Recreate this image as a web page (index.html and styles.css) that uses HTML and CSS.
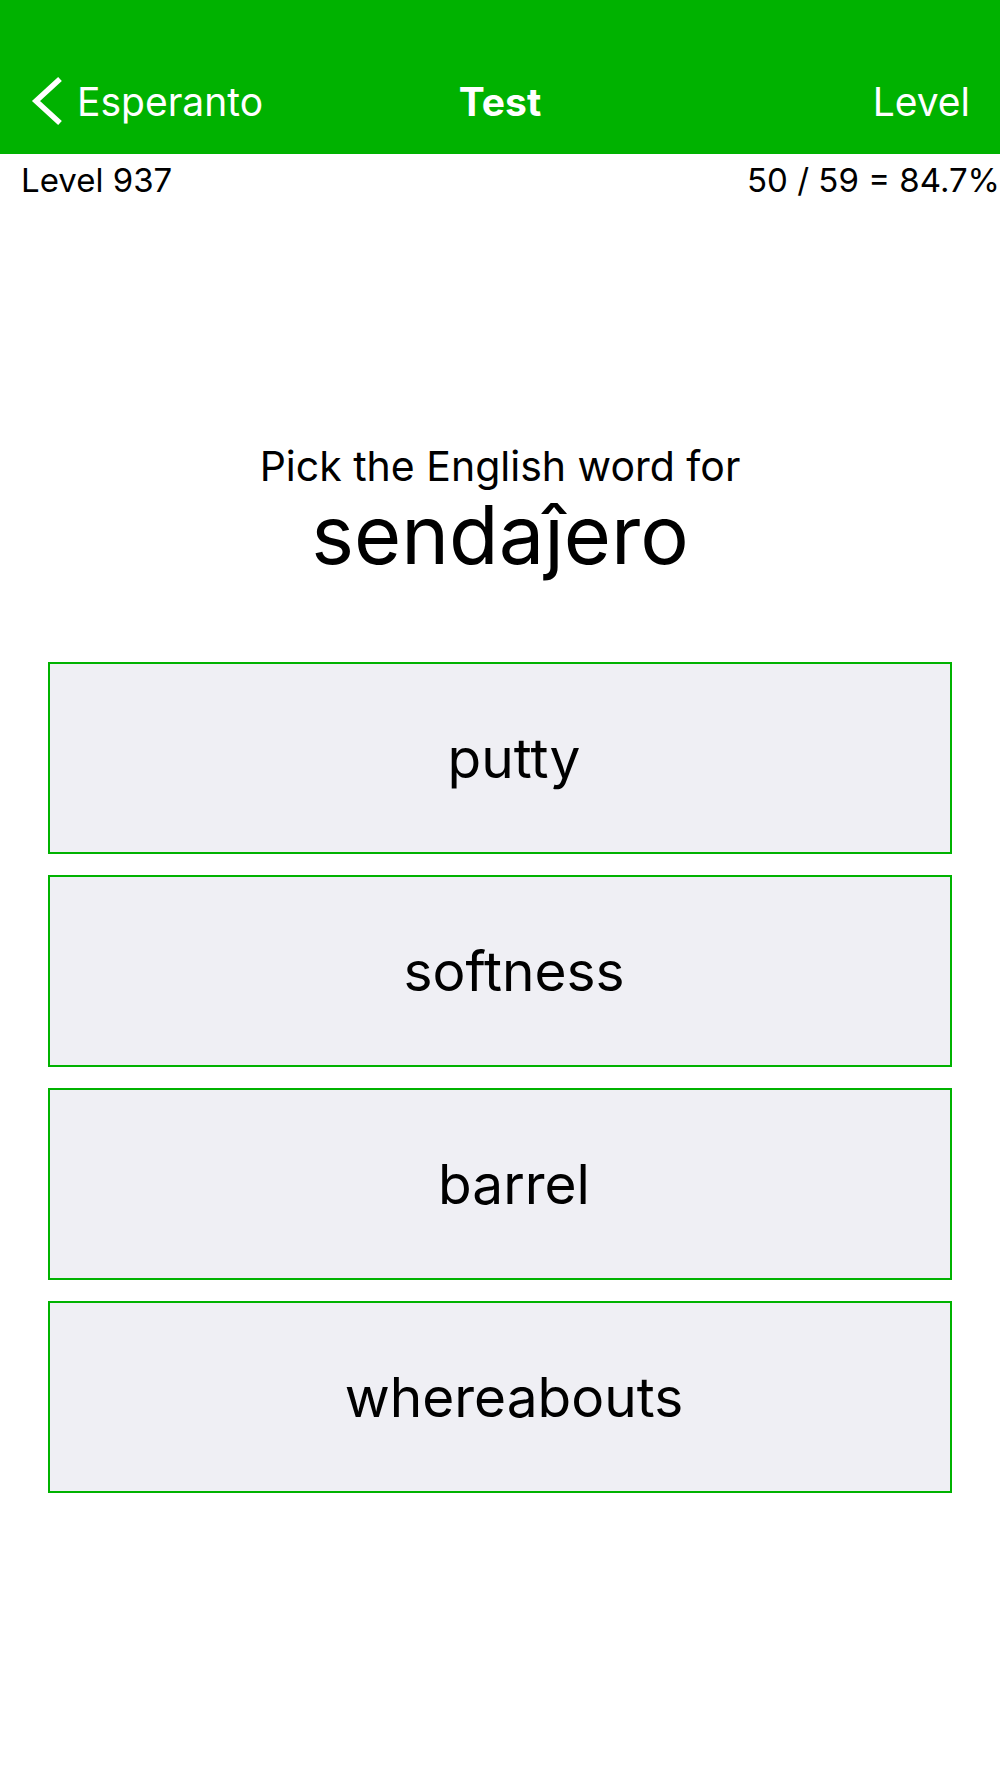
FILE: index.html
```html
<!DOCTYPE html>
<html lang="en">
<head>
  <meta charset="UTF-8" />
  <title>Test</title>
  <link rel="stylesheet" href="styles.css">
</head>
<body>

  <header class="navbar">
    <a class="nav-back" href="#">
      <svg class="chevron" width="34" height="50" viewBox="0 0 34 50">
        <polyline points="30,3 6,25 30,47" fill="none" stroke="#fff" stroke-width="5.5" />
      </svg>
      <span>Esperanto</span>
    </a>
    <div class="nav-title">Test</div>
    <a class="nav-right" href="#">Level</a>
  </header>

  <div class="stats">
    <span>Level 937</span>
    <span>50 / 59 = 84.7%</span>
  </div>

  <main class="quiz">
    <div class="prompt">Pick the English word for</div>
    <div class="word">sendaĵero</div>

    <div class="answers">
      <button class="answer">putty</button>
      <button class="answer">softness</button>
      <button class="answer">barrel</button>
      <button class="answer">whereabouts</button>
    </div>
  </main>

</body>
</html>
```

FILE: styles.css
```css
body { margin: 0; font-family: Inter, "Liberation Sans", sans-serif; background: white; color: black; }
a { color: inherit; text-decoration: none; }

.navbar { background: #00b200; color: white; height: 154px; box-sizing: border-box; padding: 48px 30px 0 30px; display: grid; grid-template-columns: 1fr auto 1fr; align-items: center; font-size: 39px; }
.nav-back { display: flex; align-items: center; gap: 13px; }
.chevron { display: block; }
.nav-title { font-weight: 700; }
.nav-right { justify-self: end; }

.stats { display: flex; justify-content: space-between; padding: 6px 0 0 21px; font-size: 33px; line-height: 40px; }

.quiz { padding: 0 48px; text-align: center; }
.prompt { margin-top: 242px; font-size: 41px; line-height: 48px; }
.word { font-size: 81px; line-height: 90px; }

.answers { margin-top: 82px; display: flex; flex-direction: column; gap: 21px; }
.answer { height: 192px; background: #efeff4; border: 2px solid #00b200; font-family: inherit; font-size: 55px; color: black; padding: 0 0 0 28px; cursor: pointer; }
```
